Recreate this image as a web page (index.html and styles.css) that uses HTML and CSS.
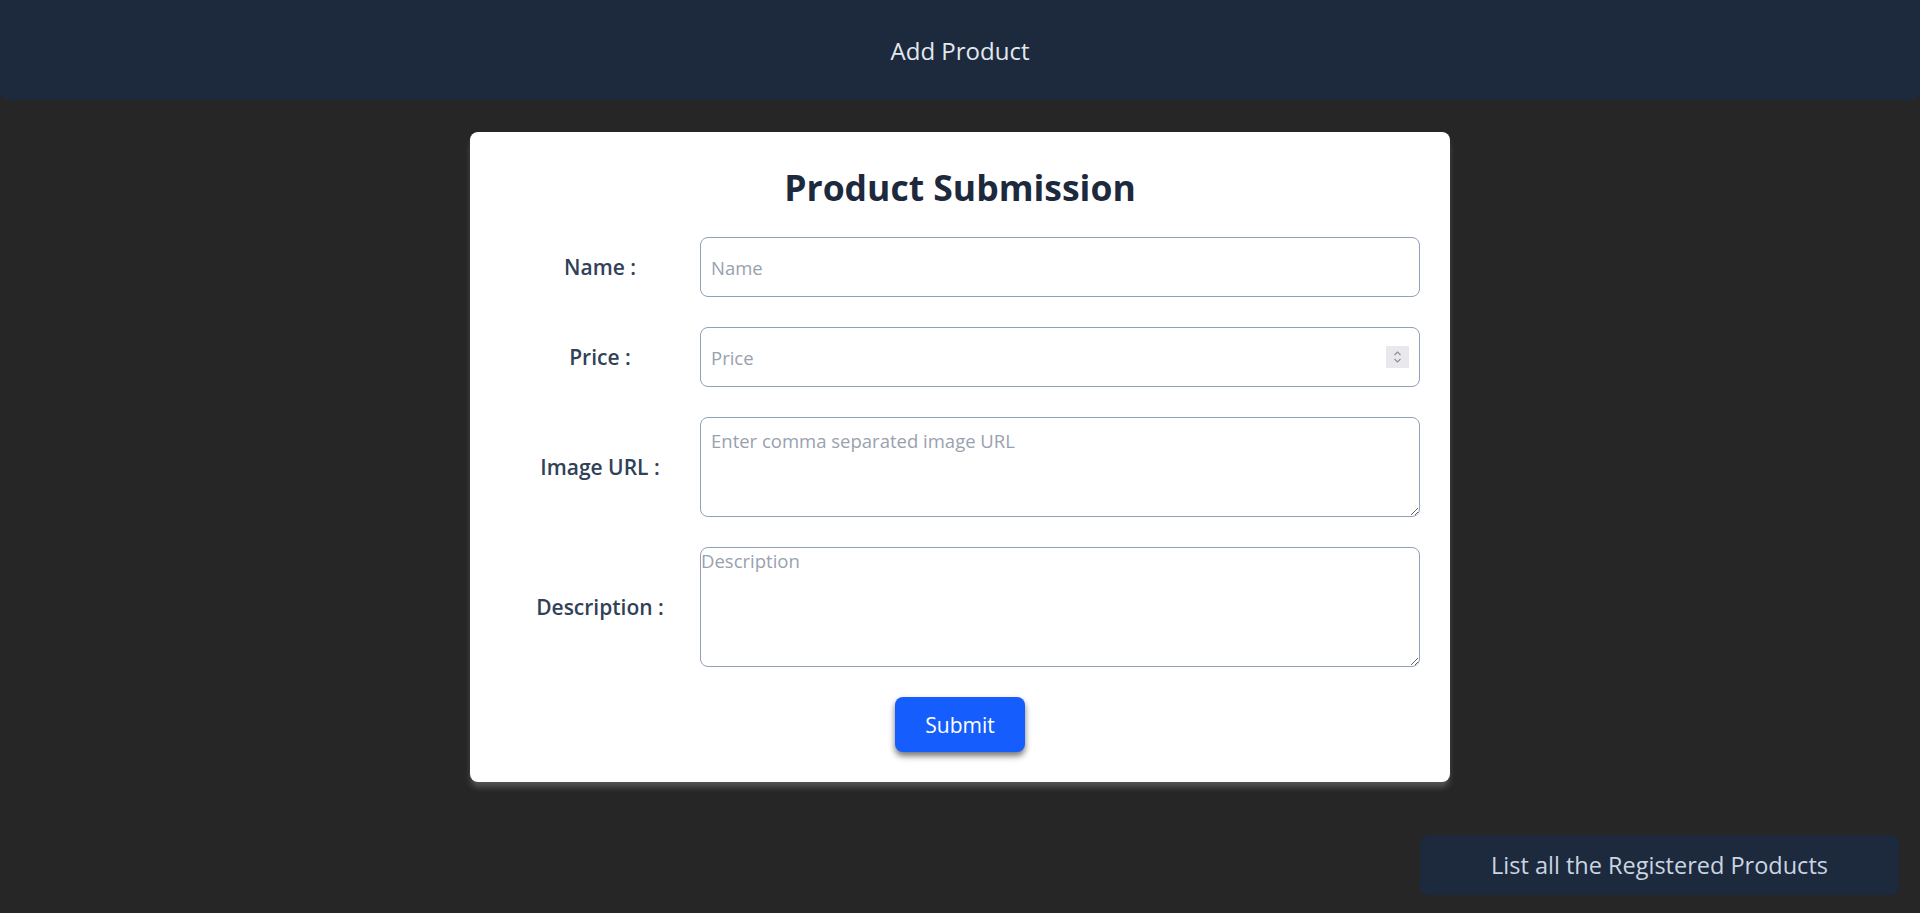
FILE: index.html
```html
<!DOCTYPE html>
<html lang="en">
<head>
<meta charset="utf-8">
<title>Add Product</title>
<link rel="stylesheet" href="styles.css">
</head>
<body>
<header class="topbar">
  <h1 class="topbar-title">Add Product</h1>
</header>
<main class="page">
  <form class="card">
    <h2 class="card-title">Product Submission</h2>
    <div class="row">
      <label class="label" for="name">Name :</label>
      <input class="field field-input" id="name" type="text" placeholder="Name">
    </div>
    <div class="row">
      <label class="label" for="price">Price :</label>
      <div class="field field-number">
        <input class="number-input" id="price" type="text" placeholder="Price">
        <span class="spinner">
          <svg width="23" height="22" viewBox="0 0 23 22"><path d="M8.5 9 L11.5 6 L14.5 9" fill="none" stroke="#8d8d92" stroke-width="1.1"/><path d="M8.5 13 L11.5 16 L14.5 13" fill="none" stroke="#8d8d92" stroke-width="1.1"/></svg>
        </span>
      </div>
    </div>
    <div class="row">
      <label class="label" for="images">Image URL :</label>
      <textarea class="field area area-images" id="images" placeholder="Enter comma separated image URL"></textarea>
    </div>
    <div class="row">
      <label class="label" for="desc">Description :</label>
      <textarea class="field area area-desc" id="desc" placeholder="Description"></textarea>
    </div>
    <div class="actions">
      <button class="submit" type="button">Submit</button>
    </div>
  </form>
  <div class="footer">
    <button class="list-btn" type="button">List all the Registered Products</button>
  </div>
</main>
</body>
</html>
```
FILE: styles.css
```css
* { box-sizing: border-box; }
html, body {
  margin: 0;
  padding: 0;
}
body {
  background: #262626;
  font-family: "Open Sans", "Noto Sans", sans-serif;
  min-height: 100vh;
}
.topbar {
  height: 100px;
  background: #1d293d;
  border-radius: 0 0 8px 8px;
  display: flex;
  align-items: center;
  justify-content: center;
}
.topbar-title {
  margin: 0;
  font-size: 24px;
  font-weight: 400;
  color: #e2e8f0;
  line-height: 1;
  padding-top: 2px;
}
.page {
  display: flex;
  flex-direction: column;
}
.card {
  width: 980px;
  margin: 32px auto 0;
  background: #ffffff;
  border-radius: 8px;
  padding: 30px 30px 30px 30px;
  box-shadow: 0 6px 6px -1px rgba(125, 125, 125, 0.55);
  display: flex;
  flex-direction: column;
  gap: 30px;
}
.card-title {
  margin: 4px 0 -1px;
  text-align: center;
  font-size: 35.5px;
  line-height: 42px;
  font-weight: 700;
  color: #1d293d;
}
.row {
  display: flex;
  align-items: center;
}
.label {
  width: 200px;
  flex: none;
  text-align: center;
  font-size: 21px;
  font-weight: 600;
  color: #314158;
}
.field {
  flex: 1;
  border: 1px solid #90a1b9;
  border-radius: 8px;
  background: #fff;
  font-family: "Open Sans", "Noto Sans", sans-serif;
  font-size: 18.5px;
  color: #1d293d;
  outline: none;
}
.field::placeholder,
.number-input::placeholder {
  color: #99a1af;
}
.field-input {
  height: 60px;
  padding: 0 10px;
}
.field-number {
  height: 60px;
  display: flex;
  align-items: center;
  padding: 0 10px;
}
.number-input {
  flex: 1;
  border: none;
  outline: none;
  padding: 0;
  font-family: "Open Sans", "Noto Sans", sans-serif;
  font-size: 18.5px;
  color: #1d293d;
  background: transparent;
}
.spinner {
  width: 23px;
  height: 22px;
  background: #e9e9ed;
  display: flex;
}
.area {
  display: block;
  resize: both;
}
.area-images {
  height: 100px;
  padding: 10px;
}
.area-desc {
  height: 120px;
  padding: 0;
}
.actions {
  display: flex;
  justify-content: center;
}
.submit {
  width: 130px;
  height: 55px;
  border: none;
  border-radius: 8px;
  background: #155dfc;
  color: #ffffff;
  font-family: "Open Sans", "Noto Sans", sans-serif;
  font-size: 21px;
  padding-top: 2px;
  box-shadow: 0 4px 6px rgba(0, 0, 0, 0.55);
  cursor: pointer;
}
.footer {
  display: flex;
  justify-content: flex-end;
  padding: 53px 21px 18px 0;
}
.list-btn {
  width: 479px;
  height: 60px;
  border: none;
  border-radius: 8px;
  background: #1d293d;
  color: #cad5e2;
  font-family: "Open Sans", "Noto Sans", sans-serif;
  font-size: 23.5px;
  cursor: pointer;
}
```
